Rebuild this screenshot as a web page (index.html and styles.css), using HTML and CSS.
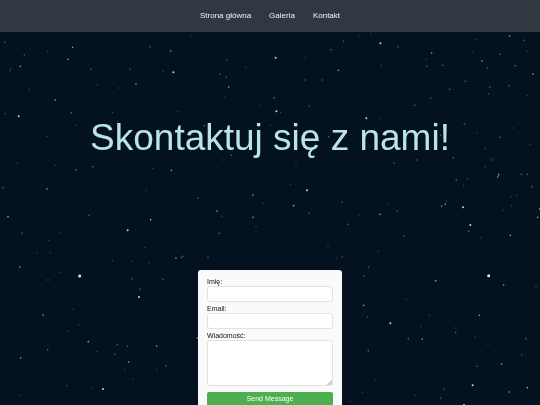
FILE: index.html
```html
<!DOCTYPE html>
<html lang="pl">
<head>
	<meta charset="UTF-8">
	<meta name="viewport" content="width=device-width, initial-scale=1.0">
	<title>Kontakt</title>
	<link rel="stylesheet" href="styles.css">
</head>
<body>
	<!-- night sky -->
	<svg class="sky" viewBox="0 0 1620 1215" preserveAspectRatio="xMidYMin slice" aria-hidden="true">
		<g>
			<path class="faint" d="M143 154h0M32 206h0M30 212h0M489 214h0M292 255h0M358 264h0M88 268h0M16 341h0M338 338h0M228 376h0M354 363h0M534 334h0"/>
			<path class="dim" d="M14 127h0M73 165h0M273 208h0M390 208h0M214 338h0M450 141h0"/>
			<path class="mid" d="M218 142h0M204 178h0M61 199h0M512 153h0M408 252h0M166 300h0"/>
			<path class="bright" d="M520 217h0M56 349h0"/>
		</g>
		<g transform="translate(540 0)">
			<path class="faint" d="M32 109h0M536 109h0M197 202h0M376 174h0M354 240h0M136 292h0M240 318h0M302 338h0M271 376h0"/>
			<path class="dim" d="M491 124h0M453 149h0M141 180h0M119 222h0M139 232h0M376 240h0M427 240h0M283 293h0M388 318h0M73 377h0"/>
			<path class="mid" d="M146 261h0M475 211h0"/>
			<path class="bright" d="M287 173h0M289 334h0"/>
		</g>
		<g transform="translate(1080 0)">
			<path class="faint" d="M32 102h0M348 118h0M338 156h0M199 177h0M501 154h0M64 196h0M502 286h0M59 354h0M460 384h0M352 399h0"/>
			<path class="dim" d="M115 141h0M491 121h0M421 163h0M201 199h0M248 196h0M382 204h0M466 197h0M316 244h0M269 268h0M389 262h0M385 282h0M447 257h0M212 294h0M165 316h0M313 373h0"/>
			<path class="mid" d="M449 108h0M215 159h0M366 183h0M519 222h0"/>
			<path class="bright" d="M61 130h0M19 355h0"/>
		</g>
		<g transform="translate(0 405)">
			<path class="faint" d="M141 4h0M51 84h0M166 91h0M458 100h0M439 165h0M181 294h0M147 316h0M111 354h0M151 354h0M208 363h0M435 338h0M338 377h0M395 379h0M448 384h0"/>
			<path class="dim" d="M228 104h0M278 95h0M9 158h0M66 294h0M267 241h0"/>
			<path class="mid" d="M141 162h0M24 245h0M452 254h0M514 106h0M528 369h0M59 396h0"/>
			<path class="bright" d="M383 286h0"/>
		</g>
		<g transform="translate(540 405)">
			<path class="faint" d="M127 75h0M348 82h0M332 148h0M249 205h0M228 275h0M125 244h0M536 240h0M444 334h0M469 370h0"/>
			<path class="dim" d="M154 61h0M54 190h0M118 295h0M487 201h0M387 235h0M505 268h0M486 366h0M84 367h0M9 364h0M4 367h0M446 5h0"/>
			<path class="mid" d="M219 180h0M111 228h0M219 247h0M341 212h0"/>
			<path class="bright" d="M381 166h0"/>
		</g>
		<g transform="translate(1080 405)">
			<path class="faint" d="M30 34h0M376 41h0M511 28h0M376 97h0M322 131h0M311 152h0M471 181h0M453 185h0M455 212h0M429 226h0M86 208h0M363 309h0M55 349h0M392 70h0M259 199h0"/>
			<path class="dim" d="M420 7h0M280 68h0M398 75h0M102 85h0M171 75h0M289 134h0M484 118h0M502 118h0M516 155h0M112 228h0M326 289h0M133 304h0M25 397h0M242 1h0"/>
			<path class="mid" d="M416 119h0M413 126h0M60 238h0M245 213h0M256 207h0M451 301h0M533 247h0M539 222h0"/>
			<path class="bright" d="M309 217h0M331 270h0"/>
		</g>
		<g transform="translate(0 810)">
			<path class="faint" d="M96 6h0M179 8h0M219 118h0M237 165h0M204 183h0M291 244h0M375 300h0M471 300h0M400 327h0M201 347h0M278 354h0M60 376h0"/>
			<path class="dim" d="M144 30h0M395 27h0M489 28h0M419 57h0M352 224h0M383 229h0M345 253h0M143 239h0M498 287h0"/>
			<path class="mid" d="M129 135h0M265 215h0M62 264h0M470 228h0M386 276h0M592 204h0"/>
			<path class="bright" d="M417 81h0M309 357h0"/>
			<path class="big" d="M239 18h0"/>
		</g>
		<g transform="translate(1020 810)">
			<path class="faint" d="M198 88h0M268 136h0M243 169h0M347 174h0M405 201h0M444 223h0M106 331h0M68 367h0M225 376h0M30 394h0M588 50h0"/>
			<path class="dim" d="M73 19h0M347 187h0M205 206h0M558 206h0M545 255h0M85 242h0M410 289h0M312 358h0M301 385h0M83 141h0"/>
			<path class="mid" d="M287 32h0M491 45h0M71 106h0M418 136h0M247 207h0M485 282h0M508 366h0M562 353h0"/>
			<path class="bright" d="M151 160h0M398 346h0M372 405h0"/>
			<path class="big" d="M446 17h0"/>
		</g>
	</svg>

	<nav class="navbar">
		<a href="#">Strona główna</a>
		<a href="#">Galeria</a>
		<a href="#">Kontakt</a>
	</nav>

	<main>
		<h1>Skontaktuj się z nami!</h1>
		<form class="contact-form">
			<label for="name">Imię:</label>
			<input type="text" id="name" name="name">
			<label for="email">Email:</label>
			<input type="email" id="email" name="email">
			<label for="message">Wiadomość:</label>
			<textarea id="message" name="message"></textarea>
			<button type="submit">Send Message</button>
		</form>
	</main>
</body>
</html>
```
FILE: styles.css
```css
* {
	box-sizing: border-box;
}
body {
	margin: 0;
	background-color: #04111e;
	font-family: "Liberation Sans", Arial, sans-serif;
}
.sky {
	position: fixed;
	top: 0;
	left: 0;
	width: 100%;
	height: 100%;
	z-index: -1;
	fill: none;
	stroke: #dcebf2;
	stroke-linecap: round;
}
.faint {
	stroke-width: 5;
	opacity: 0.2;
}
.dim {
	stroke-width: 5;
	opacity: 0.35;
}
.mid {
	stroke-width: 5;
	opacity: 0.65;
}
.bright {
	stroke-width: 6;
	opacity: 0.9;
}
.big {
	stroke-width: 9;
}
.navbar {
	display: flex;
	justify-content: center;
	gap: 18px;
	padding: 11px 0 12px;
	background-color: #303942;
}
.navbar a {
	color: #f2f2f2;
	font-size: 8px;
	line-height: 9px;
	text-decoration: none;
}
h1 {
	margin: 85px 0 111px;
	color: #b8e4ea;
	font-size: 37px;
	font-weight: normal;
	line-height: 42px;
	text-align: center;
}
.contact-form {
	width: 144px;
	margin: 0 auto;
	padding: 8px 9px;
	background-color: #fafafa;
	border-radius: 3px;
}
label {
	display: block;
	color: #111;
	font-size: 7px;
	line-height: 8px;
}
input,
textarea {
	display: block;
	width: 100%;
	height: 16px;
	margin: 0 0 3px;
	padding: 3px;
	background-color: #fff;
	border: 1px solid #e2e2e2;
	border-radius: 3px;
	font-family: inherit;
	font-size: 7px;
}
textarea {
	height: 46px;
	margin-bottom: 6px;
	resize: vertical;
}
textarea::-webkit-resizer {
	background: linear-gradient(135deg, transparent 80%, #d0d0d0 80%);
}
button {
	display: block;
	width: 100%;
	padding: 3px;
	background-color: #4caf50;
	border: none;
	border-radius: 2px;
	color: white;
	font-family: inherit;
	font-size: 7px;
	line-height: 8px;
	cursor: pointer;
}
```
